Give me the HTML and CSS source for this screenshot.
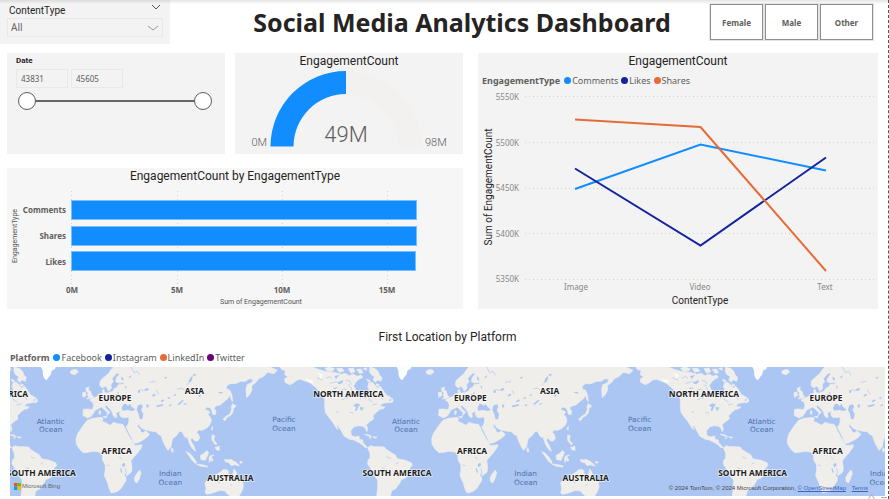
FILE: index.html
```html
<!DOCTYPE html>
<html lang="en">
<head>
<meta charset="utf-8">
<meta name="viewport" content="width=device-width, initial-scale=1">
<title>Social Media Analytics Dashboard</title>
<link rel="stylesheet" href="styles.css">
</head>
<body>
<main class="page">
  <header class="header">
    <section class="slicer">
      <div class="slicer-head">
        <label for="content-type">ContentType</label>
        <svg class="chevron" viewBox="0 0 12 8" aria-hidden="true"><path d="M2 2l4 4 4-4"/></svg>
      </div>
      <div class="dropdown">
        <select id="content-type"><option>All</option><option>Image</option><option>Video</option><option>Text</option></select>
        <svg class="chevron light" viewBox="0 0 12 8" aria-hidden="true"><path d="M1 2l5 4 5-4"/></svg>
      </div>
    </section>
    <h1 class="title">Social Media Analytics Dashboard</h1>
    <div class="genders">
      <button type="button">Female</button>
      <button type="button">Male</button>
      <button type="button">Other</button>
    </div>
  </header>

  <div class="visuals">
    <section class="card date">
      <h2 class="date-title">Date</h2>
      <div class="date-inputs">
        <input type="text" value="43831" aria-label="Start date">
        <input type="text" value="45605" aria-label="End date">
      </div>
      <div class="range">
        <input type="range" min="43831" max="45605" value="43831" aria-label="Range start">
        <input type="range" min="43831" max="45605" value="45605" aria-label="Range end">
      </div>
    </section>

    <section class="card gauge">
      <h2 class="card-title">EngagementCount</h2>
      <svg class="plot" viewBox="0 0 228 84" role="img" aria-label="49M of 98M">
        <path fill="#f3f1ef" d="M111 1A75.500 75.500 0 0 1 186.500 76.500H163.500A52.500 52.500 0 0 0 111 24Z"/>
        <path fill="#118dff" d="M111 1A75.500 75.500 0 0 0 35.500 76.500H58.500A52.500 52.500 0 0 1 111 24Z"/>
        <text class="gauge-end" x="32" y="76" text-anchor="end">0M</text>
        <text class="gauge-end" x="190" y="76">98M</text>
        <text class="gauge-value" x="111" y="72" text-anchor="middle">49M</text>
      </svg>
    </section>

    <section class="card bars">
      <h2 class="card-title">EngagementCount by EngagementType</h2>
      <svg class="plot" viewBox="0 2 456 124" role="img" aria-label="Sum of EngagementCount by EngagementType">
        <g class="grid-lines strong">
          <path d="M64.500 8V102M170.500 8V102M275.500 8V102M380.500 8V102"/>
        </g>
        <g fill="#118dff" stroke="#77bdff">
          <rect x="64.500" y="17.500" width="345" height="19"/>
          <rect x="64.500" y="43.500" width="345" height="19"/>
          <rect x="64.500" y="68.500" width="344" height="19"/>
        </g>
        <g class="bar-label" text-anchor="end">
          <text x="59" y="30">Comments</text><text x="59" y="56">Shares</text><text x="59" y="82">Likes</text>
        </g>
        <g class="bar-label" text-anchor="middle">
          <text x="65" y="110">0M</text><text x="170" y="110">5M</text><text x="275" y="110">10M</text><text x="380" y="110">15M</text>
        </g>
        <text class="bar-axis" x="254" y="121" text-anchor="middle">Sum of EngagementCount</text>
        <text class="bar-axis" transform="translate(10 53) rotate(-90)" text-anchor="middle">EngagementType</text>
      </svg>
    </section>

    <section class="card lines">
      <h2 class="card-title">EngagementCount</h2>
      <ul class="legend">
        <li class="legend-name">EngagementType</li>
        <li><i class="dot blue"></i>Comments</li>
        <li><i class="dot navy"></i>Likes</li>
        <li><i class="dot orange"></i>Shares</li>
      </ul>
      <svg class="plot" viewBox="0 0 400 222" role="img" aria-label="Sum of EngagementCount by ContentType">
        <g class="grid-lines">
          <path d="M47 9.500H397M47 55.500H397M47 101.500H397M47 146.500H397M47 192.500H397"/>
        </g>
        <g class="tick" text-anchor="end">
          <text x="41" y="13">5550K</text><text x="41" y="59">5500K</text><text x="41" y="104">5450K</text><text x="41" y="150">5400K</text><text x="41" y="195">5350K</text>
        </g>
        <g class="tick" text-anchor="middle">
          <text x="98" y="203">Image</text><text x="222" y="203">Video</text><text x="347" y="203">Text</text>
        </g>
        <g class="series">
          <path stroke="#118dff" d="M97 102L222.500 57.500L348 83.500"/>
          <path stroke="#12239e" d="M97 81.500L222.500 158.500L348 70.500"/>
          <path stroke="#e66c37" d="M97 32.500L222.500 40L348 184"/>
        </g>
        <text class="axis" x="222" y="217" text-anchor="middle">ContentType</text>
        <text class="axis" transform="translate(14 100) rotate(-90)" text-anchor="middle">Sum of EngagementCount</text>
      </svg>
    </section>
  </div>

  <section class="map-card">
    <h2 class="card-title">First Location by Platform</h2>
    <ul class="legend map-legend">
      <li class="legend-name">Platform</li>
      <li><i class="dot blue"></i>Facebook</li>
      <li><i class="dot navy"></i>Instagram</li>
      <li><i class="dot orange"></i>LinkedIn</li>
      <li><i class="dot purple"></i>Twitter</li>
    </ul>
    <div class="map">
      <svg class="plot" viewBox="30 141 2625 387" role="img" aria-label="World map">
        <defs>
          <g id="world">
            <g fill="#efeeeb" stroke="#efeeeb" stroke-width="2" stroke-linejoin="round">
              <!-- Europe and Asia -->
              <path d="M340 141L332 150 326 160 312 172 301 182 299 196 307 204 317 198 322 206 326 214 334 205 333 193 340 185 336 176 345 165 354 158 358 163 349 174 347 185 356 189 372 187 373 191 355 194 351 202 343 205 339 213 327 218 318 219 313 215 311 207 307 212 308 220 298 222 290 230 280 234 269 240 279 248 281 257 277 269 262 267 250 268 249 287 257 290 262 294 274 289 281 279 286 270 297 265 304 261 309 265 317 273 323 279 320 287 326 281 330 277 319 266 314 258 319 256 331 268 336 276 340 287 347 294 351 289 347 280 355 276 362 274 358 282 363 291 373 293 386 291 387 303 383 316 378 320 384 333 393 350 401 370 412 369 429 360 441 352 449 343 441 336 437 332 430 338 423 337 420 328 412 319 415 313 423 323 434 329 450 333 468 335 476 344 483 346 488 361 495 377 504 391 513 380 515 367 518 356 529 347 538 335 545 334 551 345 557 353 562 350 566 364 572 378 582 391 587 394 582 379 575 367 571 357 577 355 585 363 593 363 599 354 596 344 590 336 597 330 606 331 619 325 629 315 634 303 631 292 624 283 630 277 623 271 614 270 620 261 629 263 635 270 638 283 646 284 648 274 642 264 648 258 660 255 674 244 685 234 692 222 689 210 681 208 679 199 690 191 707 191 722 184 736 184 748 176 760 178 755 188 741 194 738 207 740 233 750 222 756 209 755 197 768 187 776 176 791 169 803 157 821 161 832 151 822 146 810 141Z"/>
              <!-- Africa -->
              <path d="M262 301L278 295 306 292 309 297 306 304 317 308 331 316 341 307 352 311 368 313 373 320 379 334 388 350 396 364 405 377 426 374 425 382 412 400 400 413 393 422 396 444 394 456 378 469 378 482 372 491 362 507 350 515 334 519 328 507 323 489 313 467 316 447 315 433 307 420 307 406 298 396 280 394 264 397 250 398 238 387 229 372 228 358 233 341 243 326 250 316Z"/>
              <path d="M419 450L423 460 417 478 411 489 404 484 404 472 410 461Z"/>
              <!-- British Isles, Iceland, Mediterranean islands -->
              <path d="M258 204L267 201 265 209 272 214 275 225 281 231 273 235 260 237 266 230 262 224 265 219 258 212ZM248 218L257 216 258 227 249 232ZM211 154L220 149 230 149 235 156 224 164 213 161ZM309 290L320 289 318 294ZM298 272L302 273 301 283 297 282Z"/>
              <!-- Japan, Sakhalin, Sri Lanka, South-East Asia -->
              <path d="M698 251L708 258 700 266 698 279 691 287 681 292 675 302 669 298 678 289 690 282 695 268 694 260ZM691 214L696 226 698 245 693 238 690 222ZM516 383L520 391 517 397 513 391ZM634 326L638 319 637 331ZM636 345L644 347 641 360 651 371 647 375 636 361ZM645 382L658 379 658 391 650 390ZM558 395L568 399 580 412 589 426 588 431 577 422 566 406ZM589 432L606 434 622 438 622 441 600 438ZM601 407L612 400 620 392 626 397 622 408 616 421 603 419ZM630 408L642 405 633 411 640 421 635 424 631 418 628 428 627 414ZM674 418L684 420 692 418 708 427 719 438 703 434 694 437 687 428 676 425ZM720 424L729 427 720 430Z"/>
              <!-- Australia -->
              <path d="M615 489L622 480 642 474 650 463 662 456 669 449 680 449 686 454 684 461 693 467 699 461 702 447 708 455 711 466 721 475 729 488 730 502 724 517 717 528 690 528 681 521 675 513 659 511 641 518 621 523 615 518 618 506Z"/>
              <!-- North America -->
              <path d="M840 141L846 149 856 151 854 164 864 170 854 177 855 187 869 194 880 189 891 180 902 178 915 183 931 189 944 200 952 207 960 216 970 226 974 238 974 256 976 277 985 290 996 304 1005 318 1011 327 1014 329 1009 315 1015 319 1024 333 1032 348 1047 357 1061 360 1075 367 1087 374 1094 382 1102 383 1096 375 1089 369 1088 360 1078 358 1077 348 1066 351 1054 347 1052 333 1061 321 1075 317 1089 319 1096 325 1100 335 1103 326 1099 314 1111 304 1121 297 1119 287 1129 277 1140 268 1150 266 1155 261 1140 259 1148 250 1165 248 1176 239 1172 232 1158 224 1149 210 1140 198 1131 205 1125 195 1117 187 1107 188 1103 200 1109 213 1101 221 1099 237 1094 236 1089 222 1074 216 1066 208 1061 197 1068 185 1077 178 1088 172 1083 165 1072 169 1060 162 1048 167 1036 160 1023 163 1008 158 990 157 975 154 955 148 938 141ZM1166 238L1178 236 1179 245 1170 249Z"/>
              <path d="M975 145L988 141 1003 146 998 154 982 154ZM1010 146L1026 145 1033 153 1018 157ZM1045 146L1060 144 1065 155 1053 160ZM1070 148L1083 147 1089 158 1078 160ZM1109 141L1124 145 1134 153 1139 166 1146 172 1143 184 1133 180 1126 187 1119 179 1124 170 1115 165 1109 156ZM1100 178L1112 182 1106 187ZM1129 191L1138 195 1130 200ZM1089 146L1099 143 1100 151Z"/>
              <!-- Caribbean -->
              <path d="M1094 343L1108 345 1116 350 1106 348ZM1119 350L1131 352 1125 355ZM1108 353L1114 354 1109 355Z"/>
              <!-- South America -->
              <path d="M1103 383L1112 377 1122 380 1135 380 1153 381 1160 389 1172 397 1186 405 1191 416 1213 420 1234 428 1237 436 1227 448 1224 464 1218 473 1204 479 1197 493 1187 506 1175 512 1171 528 1130 528 1133 503 1133 479 1121 466 1113 448 1103 432 1104 421 1110 414 1110 400Z"/>
            </g>
            <path fill="#fcfcfb" d="M1190 141L1195 151 1196 167 1201 177 1207 181 1214 170 1220 163 1222 152 1232 147 1234 141ZM955 159L968 163 963 178ZM915 174L938 182 940 192 922 182Z"/>
            <!-- Inland water -->
            <g fill="#abc6f2">
              <path d="M365 264L371 252 379 252 384 258 390 252 395 260 406 269 397 273 382 270 368 272ZM414 256L425 253 428 261 423 270 430 282 427 298 419 297 416 282 410 269ZM439 254L446 253 445 262 440 263ZM366 432L374 428 376 437 368 442ZM363 444L367 456 364 459 360 446ZM374 459L380 471 376 470ZM532 253L548 239 551 242 538 254ZM468 257L489 252 489 257 471 262ZM1059 257L1070 250 1081 254 1075 260 1070 273 1065 272 1068 260ZM1080 261L1093 263 1087 268 1088 274 1080 268ZM1038 230L1043 220 1046 223 1042 238ZM1015 186L1030 180 1027 190 1014 193ZM1003 168L1018 165 1008 177ZM998 204L1015 202 1005 208Z"/>
              <path d="M414 211h7l-2 8h-5zM434 208l10-4 2 6-10 3zM456 225l9-4 2 4-8 5zM482 243l8-5 3 4-10 5zM501 234l10-4-2 7zM519 226l9-4-1 6zM567 180l6-10 5 2-5 13-7 2zM580 163l8-2-3 9zM652 217l17-1-4 5zM491 173l11-3-4 6zM364 169l7 7-2 7-5-6zM374 196l6 5-3 6zM353 215l5 4-5 4zM386 171l9-5-5 9zM594 227l9-4-3 8zM505 256l10-4-2 7zM550 251l12-2-9 6zM346 221l7 2-6 3z"/>
            </g>
            <g fill="none" stroke="#abc6f2" stroke-width="2">
              <path d="M414 214l10-6 5 4 15-7M560 195l12-12 4-13 9-8M365 418l-7-8M375 445l4 12-4 11M1020 213l14-6 9 5M990 190l18-5 11 5M1025 240l10-5 4-10M1007 277l8-3M1050 277l10 2M1160 410l12 6M1145 443l10 4M1188 432l8-4M1038 180l12 4 4 10M1045 193l9 11 3 13M1077 223l5 14M1130 227l13 3 5 9M1104 226l4 15 10 5M1120 210l8 9M978 175l12-5 7 6M1117 255l14-3M950 173l18 8M448 187l18-3M532 207l14-2 7 5M393 141l9 17 10-4 7 12M350 237l8 3M468 210l8 12M320 435l9 2M330 385l8-3M652 485l8 3M690 498l6-6"/>
            </g>
          </g>
        </defs>
        <rect x="30" y="141" width="2625" height="387" fill="#abc6f2"/>
        <use href="#world" x="-1067"/>
        <use href="#world"/>
        <use href="#world" x="1067"/>
        <use href="#world" x="2134"/>
        <g class="continent" text-anchor="middle">
          <text x="-21" y="230">NORTH AMERICA</text><text x="1045" y="230">NORTH AMERICA</text><text x="2112" y="230">NORTH AMERICA</text>
          <text x="124" y="467">SOUTH AMERICA</text><text x="1191" y="467">SOUTH AMERICA</text><text x="2258" y="467">SOUTH AMERICA</text>
          <text x="345" y="242">EUROPE</text><text x="1411" y="242">EUROPE</text><text x="2478" y="242">EUROPE</text>
          <text x="350" y="401">AFRICA</text><text x="1416" y="401">AFRICA</text><text x="2483" y="401">AFRICA</text>
          <text x="583" y="221">ASIA</text><text x="1649" y="221">ASIA</text>
          <text x="691" y="484">AUSTRALIA</text><text x="1757" y="484">AUSTRALIA</text>
        </g>
        <g class="ocean" text-anchor="middle">
          <text x="152" y="311">Atlantic<tspan x="152" dy="26">Ocean</tspan></text>
          <text x="1218" y="311">Atlantic<tspan x="1218" dy="26">Ocean</tspan></text>
          <text x="2285" y="311">Atlantic<tspan x="2285" dy="26">Ocean</tspan></text>
          <text x="852" y="307">Pacific<tspan x="852" dy="26">Ocean</tspan></text>
          <text x="1919" y="307">Pacific<tspan x="1919" dy="26">Ocean</tspan></text>
          <text x="511" y="469">Indian<tspan x="511" dy="26">Ocean</tspan></text>
          <text x="1577" y="469">Indian<tspan x="1577" dy="26">Ocean</tspan></text>
          <text x="2644" y="469">Indian<tspan x="2644" dy="26">Ocean</tspan></text>
        </g>
      </svg>
      <div class="bing">
        <svg viewBox="0 0 8 8" aria-hidden="true"><path fill="#f25022" d="M0 0h4v4H0z"/><path fill="#7fba00" d="M4 0h4v4H4z"/><path fill="#00a4ef" d="M0 4h4v4H0z"/><path fill="#ffb900" d="M4 4h4v4H4z"/></svg>
        <span>Microsoft Bing</span>
      </div>
      <p class="credits">© 2024 TomTom, © 2024 Microsoft Corporation, <a href="#osm">© OpenStreetMap</a> <a class="terms" href="#terms">Terms</a></p>
      <svg class="map-tools" viewBox="0 0 21 5" aria-hidden="true"><path d="M1.500 5L4.500 .5 7.500 5M14 3.500H20"/></svg>
    </div>
  </section>
</main>
</body>
</html>
```
FILE: styles.css
```css
* { box-sizing: border-box; }

body {
  margin: 0;
  background: #fff;
  color: #252423;
  font-family: Roboto, "Noto Sans", sans-serif;
  font-size: 12px;
}

h1, h2, p, ul { margin: 0; padding: 0; }

.page {
  min-height: 100vh;
  border-right: 1px dashed #555;
  background: linear-gradient(#e4e4e4, rgba(228, 228, 228, 0)) top / 100% 4px no-repeat;
}

.header {
  display: grid;
  grid-template-columns: 170px 1fr auto;
  height: 44px;
  padding-right: 15px;
}

.slicer {
  padding: 2px 7px 0;
  background: linear-gradient(#dcdcdc, #f3f3f3 4px);
}

.slicer-head {
  display: flex;
  align-items: center;
  justify-content: space-between;
  height: 16px;
  padding: 0 1px 0 2px;
  font-size: 10px;
}

.slicer-head .chevron { margin-top: -6px; }

.chevron {
  width: 12px;
  height: 8px;
  fill: none;
  stroke: #555;
}

.chevron.light { stroke: #999; }

.dropdown {
  display: grid;
  align-items: center;
  height: 19px;
  border: 1px solid #e9e9e9;
}

.dropdown > * { grid-area: 1 / 1; }

.dropdown .chevron {
  justify-self: end;
  margin-right: 3px;
  pointer-events: none;
}

.dropdown select {
  appearance: none;
  width: 100%;
  height: 17px;
  padding: 0 3px;
  border: 0;
  background: transparent;
  color: #666;
  font: 10px/17px "Noto Sans", sans-serif;
}

.title {
  align-self: center;
  padding-left: 44px;
  font: 700 25px/40px "Noto Sans", sans-serif;
  text-align: center;
  white-space: nowrap;
}

.genders {
  display: flex;
  gap: 2px;
  padding-top: 4px;
}

.genders button {
  width: 53px;
  height: 36px;
  padding: 0;
  border: 1px solid #8f8f8f;
  background: #fff;
  box-shadow: 0 0 0 1px #e4e4e4;
  color: #605e5c;
  font: 700 8px "Noto Sans", sans-serif;
}

.visuals {
  display: grid;
  grid-template-columns: 218fr 228fr 405fr;
  grid-template-rows: auto auto;
  padding: 9px 10px 0 7px;
  column-gap: 10px;
  row-gap: 14px;
}

.card { background: #f3f3f3; }

.card-title {
  font-size: 12px;
  font-weight: 400;
  line-height: 17px;
  text-align: center;
}

.plot {
  display: block;
  width: 100%;
  height: auto;
}

.date { padding: 0 9px; }

.date-title { font: 700 8px/16px Roboto, sans-serif; }

.date-inputs {
  display: flex;
  gap: 3px;
}

.date-inputs input {
  width: 52px;
  height: 19px;
  padding: 0 4px;
  border: 1px solid #e9e9e9;
  background: transparent;
  color: #605e5c;
  font: 8px "Noto Sans", sans-serif;
}

.range {
  display: grid;
  width: 98%;
  margin-top: 4px;
  padding-left: 2px;
}

.range input {
  grid-area: 1 / 1;
  appearance: none;
  width: 100%;
  height: 18px;
  margin: 0;
  background: linear-gradient(#666, #666) center / 92% 2px no-repeat;
  pointer-events: none;
}

.range input + input { background: none; }

.range input::-webkit-slider-thumb {
  appearance: none;
  width: 18px;
  height: 18px;
  border: 1px solid #605e5c;
  border-radius: 50%;
  background: #fff;
  pointer-events: auto;
}

.gauge-end { fill: #605e5c; font-size: 11px; font-weight: 300; }
.gauge-value { fill: #605e5c; font-size: 22px; font-weight: 300; }

.bars {
  grid-column: 1 / 3;
  background: #f6f6f6;
}

.lines {
  grid-area: 1 / 3 / 3 / 4;
  margin-left: 5px;
}

.grid-lines {
  fill: none;
  stroke: #d2d2d2;
  stroke-dasharray: 1 3;
}

.bar-label { fill: #605e5c; font: 700 8px "Noto Sans", sans-serif; }
.bar-axis { fill: #555; font-size: 7px; }
.tick { fill: #8a8886; font: 8px "Noto Sans", sans-serif; }
.axis { fill: #252423; font-size: 10px; }
.series { fill: none; stroke-width: 2; }

.legend {
  display: flex;
  align-items: center;
  gap: 3px;
  height: 17px;
  padding: 4px 4px 0;
  color: #605e5c;
  font: 9px/14px "Noto Sans", sans-serif;
  list-style: none;
}

.legend li {
  display: flex;
  align-items: center;
  gap: 1px;
}

.legend .legend-name {
  margin-right: 1px;
  font-weight: 700;
}

.dot {
  width: 7px;
  height: 7px;
  border-radius: 50%;
}

.blue { background: #118dff; }
.navy { background: #12239e; }
.orange { background: #e66c37; }
.purple { background: #6b007b; }

.map-card { padding: 20px 3px 0 10px; }

.map-legend {
  height: 21px;
  padding: 2px 0 0;
}

.map { position: relative; }

.continent {
  fill: #1d1d1d;
  stroke: #fff;
  stroke-opacity: .6;
  stroke-width: 5;
  paint-order: stroke;
  font: 700 25px "Noto Sans", sans-serif;
}

.ocean {
  fill: #4e6fae;
  font: 22px "DejaVu Sans", sans-serif;
}

.bing {
  position: absolute;
  bottom: 6px;
  left: 4px;
  display: flex;
  align-items: center;
  gap: 1px;
  color: #666;
  font: 6px/8px "Liberation Sans", sans-serif;
}

.bing svg {
  width: 7px;
  height: 7px;
}

.credits {
  position: absolute;
  right: 17px;
  bottom: 3px;
  color: #444;
  font: 6px/10px "Liberation Sans", sans-serif;
}

.credits a { color: #3b62b8; }
.credits .terms { margin-left: 4px; }

.map-tools {
  position: absolute;
  right: -3px;
  bottom: -3px;
  width: 21px;
  height: 5px;
  fill: none;
  stroke: #aaa;
}
```
